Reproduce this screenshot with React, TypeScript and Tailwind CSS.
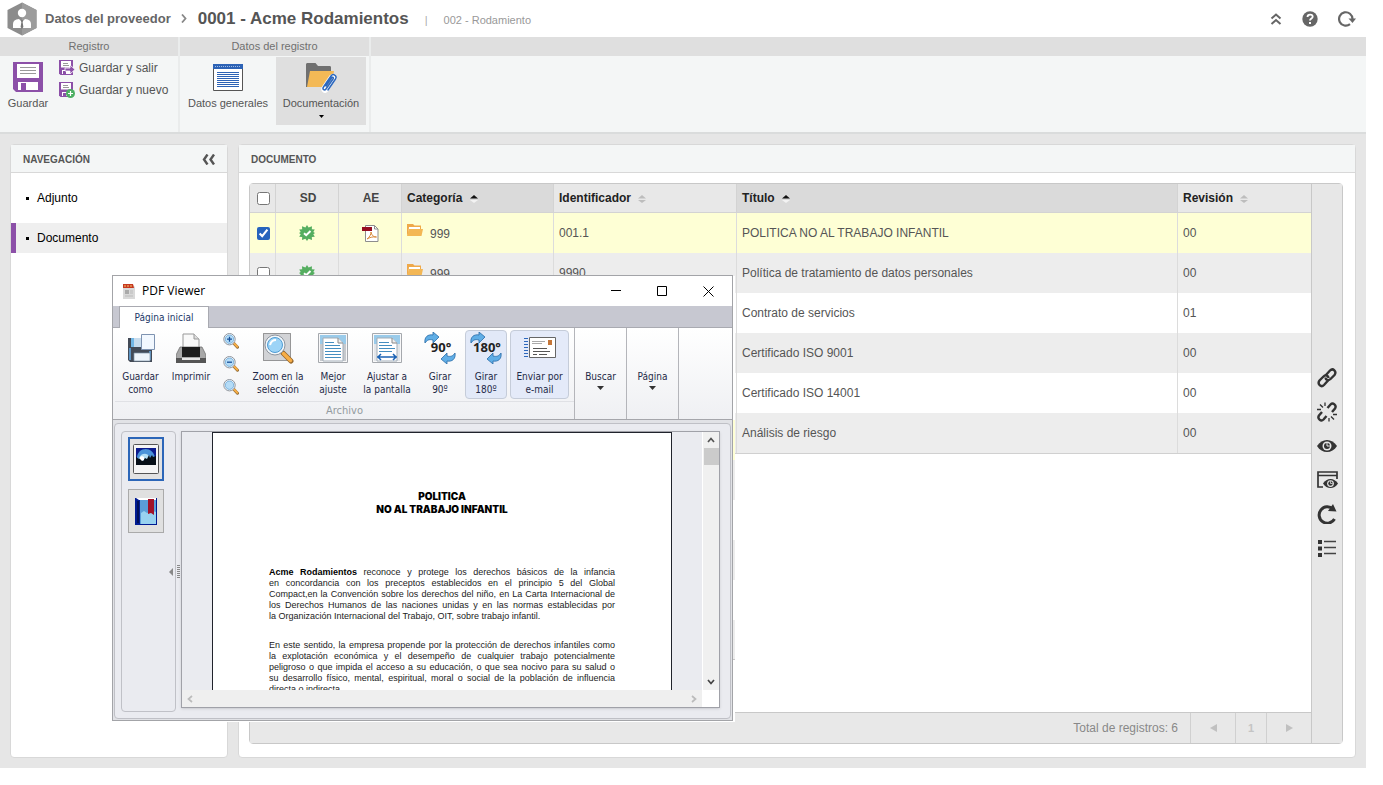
import { ReactNode, useState } from "react";

type DocumentRow = {
  id: string;
  title: string;
  revision: string;
  pdf?: boolean;
};

const ROWS: DocumentRow[] = [
  { id: "001.1", title: "POLITICA NO AL TRABAJO INFANTIL", revision: "00", pdf: true },
  { id: "9990", title: "Política de tratamiento de datos personales", revision: "00" },
  { id: "9991", title: "Contrato de servicios", revision: "01" },
  { id: "9992", title: "Certificado ISO 9001", revision: "00" },
  { id: "9993", title: "Certificado ISO 14001", revision: "00" },
  { id: "9994", title: "Análisis de riesgo", revision: "00" }
];

const POLICY_INTRO = [
  "en concordancia con los preceptos establecidos en el principio 5 del Global",
  "Compact,en la Convención sobre los derechos del niño, en La Carta Internacional de",
  "los Derechos Humanos de las naciones unidas y en las normas establecidas por"
];

const POLICY_BODY = [
  "En este sentido, la empresa propende por la protección de derechos infantiles como",
  "la explotación económica y el desempeño de cualquier trabajo potencialmente",
  "peligroso o que impida el acceso a su educación, o que sea nocivo para su salud o",
  "su desarrollo físico, mental, espiritual, moral o social de la población de influencia"
];

/* ---------- icons ---------- */

const Logo = () => (
  <svg width="30" height="34" viewBox="0 0 30 34" aria-hidden="true">
    <path d="M15 .5 29.5 8v18L15 33.5.5 26V8z" fill="#8c8c8c" />
    <path d="M15 .5 29.5 8v18L15 33.5z" fill="#9c9c9c" />
    <circle cx="15" cy="11" r="4.200" fill="#fff" />
    <path d="M6 26v-4c0-3 2-4.500 6-5l3 3 3-3c4 .5 6 2 6 5v4z" fill="#fff" />
    <path d="m13.800 18.500 1.200-.8 1.200.8-.6 1.500.8 5-1.400 2-1.400-2 .8-5z" fill="#777" />
  </svg>
);

const SaveIcon = () => (
  <svg width="30" height="30" viewBox="0 0 30 30" aria-hidden="true">
    <path d="M0 0h30v30H3l-3-3z" fill="#8c50a8" />
    <path d="M4 2h22v14H4z" fill="#fff" />
    <path d="M7 5.500h16M7 8.500h16M7 11.500h16" stroke="#9a9a9a" />
    <path d="M5 20h20v8H5z" fill="#fff" />
    <path d="M8 21h5v7H8z" fill="#8c50a8" />
  </svg>
);

const SmallSave = ({ children }: { children: ReactNode }) => (
  <svg width="16" height="16" viewBox="0 0 16 16" aria-hidden="true">
    <path d="M0 0h14v15H1.500L0 13.500z" fill="#8c50a8" />
    <path d="M2 1h10v6.500H2z" fill="#fff" />
    <path d="M4 3.500h5M4 5.500h6" stroke="#999" />
    <path d="M3 10h9v4H3z" fill="#fff" />
    <path d="M4 11h3v3H4z" fill="#8c50a8" />
    {children}
  </svg>
);

const FormIcon = () => (
  <svg width="30" height="27" viewBox="0 0 30 27" aria-hidden="true">
    <path d="M.5 3v23.500h29V3" fill="#fff" stroke="#555" />
    <path d="M0 0h30v5H0z" fill="#2d63b6" />
    <path d="M2 2.500h26" stroke="#9fbbe4" strokeDasharray="1 1" />
    <path d="M4 8.500h22M4 10.500h22M4 12.500h22M4 14.500h22M4 16.500h22M4 18.500h22M4 20.500h22M4 22.500h22" stroke="#2d63b6" />
  </svg>
);

const DocsIcon = () => (
  <svg width="31" height="30" viewBox="0 0 31 30" aria-hidden="true">
    <path d="M0 1.500C0 .6.600 0 1.500 0h8L12 3h11.500c1 0 1.500.5 1.500 1.500V24H0z" fill="#707070" />
    <path d="M4 8h24l-3 16H1z" fill="#f3b956" />
    <g fill="none" stroke="#fff" strokeWidth="3.500" strokeLinecap="round">
      <path d="m18 24 7-10c2-3 5-1 3.500 1.500L21 27c-2 2.500-5 .5-3.500-2.500l7.500-11" />
    </g>
    <path
      d="m20 23 5.500-8c1-1.500 2.500-.5 1.500 1l-7 10c-1.500 2-4 .5-2.500-2l7.500-11c2-3 6.500-.5 4.500 3l-7.500 11"
      fill="none"
      stroke="#2d68bd"
      strokeWidth="1.500"
      strokeLinecap="round"
    />
  </svg>
);

const SealIcon = () => (
  <svg width="16" height="16" viewBox="0 0 16 16" className="mx-auto" aria-hidden="true">
    <path
      d="m8 0 1.600 2.500L13 1.200l-.2 3.100 3 .2-1.500 2.400L16 8l-1.700 1.300 1.500 2.400-3 .2.200 3.100-3.400-1.300L8 16l-1.600-2.300L3 15l.2-3.100-3-.2 1.500-2.400L0 8l1.700-1.100L.2 4.500l3-.2L3 1.200l3.400 1.300z"
      fill="#55ae60"
    />
    <path d="m5 8.200 2.200 2L11.500 6" fill="none" stroke="#fff" strokeWidth="2" />
  </svg>
);

const PdfIcon = () => (
  <svg width="17" height="17" viewBox="0 0 17 17" className="mx-auto" aria-hidden="true">
    <path d="M3.500.500h9l3.500 3.500v12.500H3.500z" fill="#fff" stroke="#8d8d8d" />
    <path d="M12.500.500V4H16" fill="none" stroke="#8d8d8d" />
    <path d="M0 2h10v4H0z" fill="#960d20" />
    <path d="M5 14c3-2 4-5 4-7 .5 3 2 5 5.500 5-4-.5-7 .5-9.500 2" fill="none" stroke="#d98a3a" />
  </svg>
);

const FolderIcon = () => (
  <svg width="16" height="13" viewBox="0 0 16 13" aria-hidden="true">
    <path d="M0 0h6l1.500 1.500H14V5H3L0 12z" fill="#efa94a" />
    <path d="M2 3h11v2H3L1.500 8z" fill="#fff" />
    <path d="M2 5h14l-1.500 7H0z" fill="#f3b755" />
  </svg>
);

const SortIcon = ({ active = false }: { active?: boolean }) => (
  <svg width="8" height="8" viewBox="0 0 8 8" className="ml-1 inline-block" aria-hidden="true">
    <path d="M0 3.500 4 0l4 3.500z" fill={active ? "#111" : "#bdbdbd"} />
    <path d="M0 5h8L4 8z" fill={active ? "#f3f3f3" : "#bdbdbd"} />
  </svg>
);

const Triangle = ({ className }: { className: string }) => (
  <svg width="7" height="4" viewBox="0 0 7 4" className={className} aria-hidden="true">
    <path d="M0 0h7L3.500 4z" fill="currentColor" />
  </svg>
);

const LensIcon = ({ sign }: { sign?: string }) => (
  <svg width="16" height="16" viewBox="0 0 16 16" aria-hidden="true">
    <path d="m10.500 10 4 4.200" stroke="#8f6c38" strokeWidth="3" strokeLinecap="round" />
    <path d="m11 10.300 3.300 3.500" stroke="#f5ac45" strokeWidth="2" strokeLinecap="round" />
    <circle cx="6.500" cy="6.200" r="5.700" fill="#f3f7fb" stroke="#8f959d" />
    <circle cx="6.500" cy="6.200" r="4.200" fill="#b5dcf7" stroke="#5c9fd2" strokeWidth=".7" />
    {sign === "plus" ? <path d="M4 6.200h5M6.500 3.700v5" stroke="#174f99" strokeWidth="1.300" /> : null}
    {sign === "minus" ? <path d="M4 6.200h5" stroke="#174f99" strokeWidth="1.300" /> : null}
  </svg>
);

const SaveAsIcon = () => (
  <svg width="28" height="30" viewBox="0 0 28 30" aria-hidden="true">
    <path d="M1 5h24v24H3l-2-2z" fill="#434a56" />
    <path d="M4 5h3v9H4z" fill="#73b7e5" />
    <path d="M7 5h12v9H7z" fill="#c8dced" />
    <path d="M2 15h2v12H2zM22 18h2v9h-2z" fill="#5c93c2" />
    <path d="M7 20h16v8H7z" fill="#eef4fa" stroke="#7d93a8" strokeWidth=".7" />
    <path d="M14.500 1.500h13v15h-13z" fill="#f2f8ff" stroke="#7e93b1" />
  </svg>
);

const PrintIcon = () => (
  <svg width="30" height="30" viewBox="0 0 30 30" aria-hidden="true">
    <path d="M7 16V1h11l5 5v10z" fill="#f9f9f9" stroke="#999" />
    <path d="M18 1v5h5" fill="#ddd" stroke="#999" />
    <path d="M4 14h22l4 8v6H0v-6z" fill="#a8a8a8" stroke="#666" strokeWidth=".7" />
    <path d="M6 14h18v10H6z" fill="#1c1c1c" />
    <path d="M0 25h30v5H0z" fill="#555" />
    <path d="M6 25h18v2H6z" fill="#e6e6e6" />
  </svg>
);

const ZoomSelectionIcon = () => (
  <svg width="32" height="32" viewBox="0 0 32 32" aria-hidden="true">
    <path d="M1.500 1.500h27v27h-27z" fill="#d2d3d6" stroke="#444" strokeDasharray="1 1" />
    <path d="m21 21 8 8" stroke="#96672c" strokeWidth="5" strokeLinecap="round" />
    <path d="m21.500 21.500 7 7" stroke="#f8ae47" strokeWidth="3.500" strokeLinecap="round" />
    <circle cx="13" cy="13" r="10" fill="#f3f7fa" stroke="#8e959f" />
    <circle cx="13" cy="13" r="7.500" fill="#9dd4f7" stroke="#4f9cd4" />
    <path d="M8 13c1-4 3-5 6-5" fill="none" stroke="#fff" strokeWidth="2" />
  </svg>
);

const FitIcon = ({ wide = false }: { wide?: boolean }) => (
  <svg width="30" height="30" viewBox="0 0 30 30" aria-hidden="true">
    <path d="M.5.500h29v29H.5z" fill="#f8f8f9" stroke="#a5a8ad" />
    <path d="M2 2h26v26H2z" fill={wide ? "#e3e6e9" : "#c6c9cd"} />
    <path d="M2 2h26v9H2z" fill="#9acbea" />
    <path d="M5 5h15l5 5v18H5z" fill="#fff" stroke="#a2adb8" />
    <path d="M20 5v5h5" fill="#eee" stroke="#888" />
    <path
      d={wide ? "M7 9.500h10M7 12.500h13M7 15.500h16M7 18.500h13" : "M7 9.500h9M7 12.500h15M7 15.500h16M7 18.500h16M7 21.500h16M7 24.500h16"}
      stroke="#458ec0"
    />
    {wide ? <path d="M5 24h20M9 21l-3 3 3 3M21 21l3 3-3 3" fill="none" stroke="#1a62b4" strokeWidth="1.500" /> : null}
  </svg>
);

const RotateIcon = ({ label }: { label: string }) => (
  <svg width="32" height="32" viewBox="0 0 32 32" aria-hidden="true">
    <g fill="#60aee6" stroke="#286ba7" strokeWidth=".8">
      <path d="M1 11C0 5 4 2 9 3V0l6 5-6 6V8C5 7 3 8 1 11z" />
      <path d="M31 21c1 6-3 9-8 8v3l-6-5 6-6v3c4 1 6 0 8-3z" />
    </g>
    <text x="17" y="20" textAnchor="middle" fontFamily="Open Sans, sans-serif" fontSize="13" fontWeight="700" fill="#222">
      {label}
    </text>
  </svg>
);

const MailIcon = () => (
  <svg width="32" height="22" viewBox="0 0 32 22" aria-hidden="true">
    <path d="M2 1v20" stroke="#2d68bd" strokeWidth="4" strokeDasharray="1 2" />
    <path d="M5.500.500h26v20h-26z" fill="#fff" stroke="#666" />
    <path d="M8 4.500h13M8 6.500h10" stroke="#aaa" />
    <path d="M9 11.500h14M9 14.500h17M9 17.500h4M15 17.500h8" stroke="#555" />
    <path d="M24 3h4v5h-4z" fill="#c57639" />
  </svg>
);

const ThumbIcon = () => (
  <svg width="26" height="30" viewBox="0 0 26 30" aria-hidden="true">
    <rect x=".5" y=".5" width="25" height="29" rx="1" fill="#f5f5f5" stroke="#555" />
    <path d="M3 4h20v17H3z" fill="#0b1b8c" />
    <path d="M4 14c0-11 16-13 18 0v3H4z" fill="#4a93d9" />
    <path d="M6 14c2-5 9-6 11 0v2H6z" fill="#b2def6" />
    <path d="M3 13l3 2 2-1 2 3 2-3 2 1 2-4 1 3 2-3 1 2 3-1v9H3z" fill="#071018" />
    <path d="m7 13 2-1 2 1v3l-2 1-2-2z" fill="#fff" />
  </svg>
);

const BookIcon = () => (
  <svg width="22" height="28" viewBox="0 0 22 28" aria-hidden="true">
    <path d="M0 1h22v27H0z" fill="#001b92" />
    <path d="M1 1h20v2H4z" fill="#fff" />
    <path d="M5 3h16v24H5z" fill="#5b9ed8" />
    <path d="M6 16l3-2 3 2 3-1 3-1 3 1v12H6z" fill="#98d2f0" />
    <path d="M2 4h2v22H2z" fill="#00105b" />
    <path d="M13 2h6v16l-3-2-3 1z" fill="#a11228" />
  </svg>
);

const ToolLink = () => (
  <svg width="20" height="20" viewBox="0 0 20 20" fill="none" stroke="#333" strokeWidth="2.400" aria-hidden="true">
    <path d="m8.500 7.500 4.500-5c3-3 7 1 4.500 4.500l-4 4c-2 2-5 1-5-1.500" />
    <path d="m11.500 12-4.500 5c-3 3-7-1-4.500-4.500l4-4c2-2 5-1 5 1.500" />
  </svg>
);

const ToolUnlink = () => (
  <svg width="20" height="20" viewBox="0 0 20 20" fill="none" stroke="#333" strokeWidth="2.400" aria-hidden="true">
    <path d="m10.500 6 3-3.500c2.500-2.500 6.500.8 4.500 4L15 10" />
    <path d="m5 10-3 3.500c-2 3.200 2 6.500 4.500 4l3-3.500" />
    <path d="m3 2.500 3 3M8 .5v3.500M0 7.500h4M14 14.500l3 3M12 16v3.500M16 12.500h4" strokeWidth="1.300" />
  </svg>
);

const EyeShape = () => (
  <>
    <path d="M0 6C5-2 15-2 20 6 15 14 5 14 0 6z" fill="#333" />
    <circle cx="10" cy="6" r="4.500" fill="#e7e7e7" />
    <circle cx="10" cy="6" r="3" fill="#333" />
    <path d="M10 3v3h3" stroke="#e7e7e7" fill="none" />
  </>
);

const ToolEye = () => (
  <svg width="20" height="12" viewBox="0 0 20 12" aria-hidden="true">
    <EyeShape />
  </svg>
);

const ToolPreview = () => (
  <svg width="21" height="18" viewBox="0 0 21 18" aria-hidden="true">
    <path d="M20 8V1H1v15h5M1 4.500h19" fill="none" stroke="#333" strokeWidth="1.700" />
    <path d="M2 2.500h5" stroke="#e7e7e7" strokeDasharray="1 1" />
    <g transform="translate(6 8) scale(.75)">
      <EyeShape />
    </g>
  </svg>
);

const ToolRefresh = () => (
  <svg width="20" height="20" viewBox="0 0 20 20" aria-hidden="true">
    <path d="M17.500 15A8.200 8.200 0 1 1 16 5" fill="none" stroke="#333" strokeWidth="3" />
    <path d="m16 0 3.500 7.500-8.500-.5z" fill="#333" />
  </svg>
);

const ToolList = () => (
  <svg width="18" height="17" viewBox="0 0 18 17" aria-hidden="true">
    <path d="M0 0h4v4H0zM0 6.500h4v4H0zM0 13h4v4H0z" fill="#333" />
    <path d="M6 1.500h12M6 7.500h12M6 13.500h12" stroke="#444" strokeWidth="1.500" />
  </svg>
);

const TOOLS = [
  { label: "Asociar", icon: <ToolLink /> },
  { label: "Desasociar", icon: <ToolUnlink /> },
  { label: "Visualizar", icon: <ToolEye /> },
  { label: "Vista previa", icon: <ToolPreview /> },
  { label: "Actualizar", icon: <ToolRefresh /> },
  { label: "Lista", icon: <ToolList /> }
];

/* ---------- main page ---------- */

const PageHeader = () => (
  <header className="flex h-[37px] items-center bg-white pl-[7px] pr-[10px] text-[#666]">
    <Logo />
    <span className="ml-2 pt-px text-[13px] font-bold text-[#666]">Datos del proveedor</span>
    <svg width="6" height="9" viewBox="0 0 6 9" className="ml-[10px] mr-[11px]" aria-hidden="true">
      <path d="m1 .5 3.500 4L1 8.500" fill="none" stroke="#888" strokeWidth="1.800" />
    </svg>
    <h1 className="text-[17px] font-bold text-[#555]">0001 - Acme Rodamientos</h1>
    <span className="ml-4 pt-1 text-[11px] text-[#aaa]">|</span>
    <span className="ml-4 pt-1 text-[11px] text-[#999]">002 - Rodamiento</span>
    <div className="ml-auto flex items-center gap-5">
      <button type="button" aria-label="Contraer">
        <svg width="12" height="12" viewBox="0 0 12 12" fill="none" stroke="#666" strokeWidth="2" aria-hidden="true">
          <path d="m1.500 5.500 4.500-4 4.500 4M1.500 11 6 7l4.500 4" />
        </svg>
      </button>
      <button type="button" aria-label="Ayuda">
        <svg width="16" height="16" viewBox="0 0 16 16" aria-hidden="true">
          <circle cx="8" cy="8" r="7.700" fill="#666" />
          <path d="M5.500 6c0-3.300 5.200-3 5.200-.3C10.700 7.500 8 7.500 8 9.500" fill="none" stroke="#fff" strokeWidth="1.800" />
          <path d="M7 11h2v2H7z" fill="#fff" />
        </svg>
      </button>
      <button type="button" aria-label="Recargar">
        <svg width="18" height="16" viewBox="0 0 18 16" aria-hidden="true">
          <path d="M12 13.200A6.700 6.700 0 1 1 14.500 8" fill="none" stroke="#666" strokeWidth="2.200" />
          <path d="M10.500 7.500H18L14.500 12z" fill="#666" />
        </svg>
      </button>
    </div>
  </header>
);

const RibbonGroup = ({ title, className, children }: { title?: string; className: string; children?: ReactNode }) => (
  <section className={className}>
    <h2 className="h-[19px] bg-[#dfdfdf] text-center text-[11px] leading-[19px] text-[#707070]">{title}</h2>
    <div className="flex h-[76px] items-start bg-[#f4f6f6]">{children}</div>
  </section>
);

const MainRibbon = () => (
  <div className="flex gap-[2px] border-b-2 border-[#dadcdc] bg-[#eaecec] text-[#555]">
    <RibbonGroup title="Registro" className="w-[178px]">
      <button type="button" className="flex w-14 flex-col items-center pt-[6px] text-[11px] leading-4">
        <SaveIcon />
        <span className="mt-[3px]">Guardar</span>
      </button>
      <div className="flex flex-col gap-[6px] pl-[3px] pt-1 text-[12px] leading-4">
        <button type="button" className="flex gap-1">
          <SmallSave>
            <path d="M6 8h5V5l5 4.500-5 4.500v-3H6z" fill="#8c50a8" stroke="#fff" strokeWidth=".8" />
          </SmallSave>
          Guardar y salir
        </button>
        <button type="button" className="flex gap-1">
          <SmallSave>
            <circle cx="11.500" cy="11.500" r="4.500" fill="#4caf62" />
            <path d="M9 11.500h5M11.500 9v5" stroke="#fff" strokeWidth="1.200" />
          </SmallSave>
          Guardar y nuevo
        </button>
      </div>
    </RibbonGroup>
    <RibbonGroup title="Datos del registro" className="w-[189px]">
      <button type="button" className="flex w-24 flex-col items-center pt-2 text-[11px] leading-4">
        <FormIcon />
        <span className="mt-1">Datos generales</span>
      </button>
      <button type="button" className="mt-[1px] flex h-[68px] w-[90px] flex-col items-center bg-[#dfdfdf] pt-[6px] text-[11px] leading-4">
        <DocsIcon />
        <span className="mt-[2px]">Documentación</span>
        <Triangle className="mt-1 h-[3px] w-[5px] text-black" />
      </button>
    </RibbonGroup>
    <RibbonGroup className="flex-1" />
  </div>
);

const NavItem = ({ label, active = false }: { label: string; active?: boolean }) => (
  <li>
    <a
      href="#"
      className={
        active
          ? "flex h-[30px] items-center gap-2 border-l-[5px] border-[#8c50a8] bg-[#efefef] pl-[10px]"
          : "flex h-[30px] items-center gap-2 border-l-[5px] border-transparent pl-[10px]"
      }
    >
      <span className="size-[3px] bg-black" />
      {label}
    </a>
  </li>
);

const NavPanel = () => (
  <nav className="w-[218px] shrink-0 rounded-sm border border-[#d8d8d8] bg-white">
    <div className="flex h-7 items-center justify-between border-b border-[#d8d8d8] bg-[#f4f6f6] px-3 pt-px">
      <h2 className="text-[10px] font-bold text-[#555]">NAVEGACIÓN</h2>
      <button type="button" aria-label="Ocultar navegación">
        <svg width="13" height="11" viewBox="0 0 13 11" fill="none" stroke="#555" strokeWidth="2.400" aria-hidden="true">
          <path d="M5.500.500 2 5.500l3.500 5M12 .5l-3.500 5 3.500 5" />
        </svg>
      </button>
    </div>
    <ul className="flex flex-col gap-[10px] pt-[10px] text-[12px] text-black">
      <NavItem label="Adjunto" />
      <NavItem label="Documento" active />
    </ul>
  </nav>
);

const headCell = "border-b border-r border-[#d3d3d3] text-left font-bold text-[#222]";
const bodyCell = "border-r border-[#dcdcdc] px-[5px]";

const DocumentsTable = () => {
  const [selected, setSelected] = useState<string[]>(["001.1"]);

  const toggle = (id: string) => {
    setSelected((prev) => (prev.includes(id) ? prev.filter((item) => item !== id) : [...prev, id]));
  };

  const toggleAll = () => {
    setSelected((prev) => (prev.length === ROWS.length ? [] : ROWS.map((row) => row.id)));
  };

  const rowColor = (row: DocumentRow, index: number) => {
    if (selected.includes(row.id)) {
      return "h-10 bg-[#feffd5]";
    }
    return index % 2 ? "h-10 bg-[#ededed]" : "h-10 bg-white";
  };

  return (
    <table className="w-full table-fixed border-separate border-spacing-0 border-b border-[#d0d0d0] text-[12px] text-[#555]">
      <colgroup>
        <col className="w-[26px]" />
        <col className="w-[63px]" />
        <col className="w-[63px]" />
        <col className="w-[152px]" />
        <col className="w-[183px]" />
        <col />
        <col className="w-[133px]" />
      </colgroup>
      <thead>
        <tr className="h-[29px] bg-[#e8e8e8]">
          <th className={headCell}>
            <input
              type="checkbox"
              aria-label="Seleccionar todo"
              className="ml-[7px] block size-[13px] accent-[#2764bd]"
              checked={selected.length === ROWS.length}
              onChange={toggleAll}
            />
          </th>
          <th className="border-b border-r border-[#d3d3d3] pl-[2px] text-center font-bold text-[#444]">SD</th>
          <th className="border-b border-r border-[#d3d3d3] pl-[2px] text-center font-bold text-[#444]">AE</th>
          <th className={`${headCell} bg-[#dadada] px-[5px]`}>
            Categoría <SortIcon active />
          </th>
          <th className={`${headCell} px-[5px]`}>
            Identificador <SortIcon />
          </th>
          <th className={`${headCell} bg-[#dadada] px-[5px]`}>
            Título <SortIcon active />
          </th>
          <th className="border-b border-[#d3d3d3] px-[5px] text-left font-bold text-[#222]">
            Revisión <SortIcon />
          </th>
        </tr>
      </thead>
      <tbody>
        {ROWS.map((row, index) => (
          <tr key={row.id} className={rowColor(row, index)}>
            <td className="border-r border-[#dcdcdc]">
              <input
                type="checkbox"
                aria-label={row.title}
                className="ml-[7px] block size-[13px] accent-[#2764bd]"
                checked={selected.includes(row.id)}
                onChange={() => toggle(row.id)}
              />
            </td>
            <td className={bodyCell}>
              <SealIcon />
            </td>
            <td className={bodyCell}>{row.pdf ? <PdfIcon /> : null}</td>
            <td className={bodyCell}>
              <div className="flex items-start gap-[7px] pt-[2px]">
                <FolderIcon />
                <span className="leading-5">999</span>
              </div>
            </td>
            <td className={bodyCell}>{row.id}</td>
            <td className={bodyCell}>{row.title}</td>
            <td className="px-[5px]">{row.revision}</td>
          </tr>
        ))}
      </tbody>
    </table>
  );
};

const DocumentPanel = () => (
  <section className="flex min-w-0 flex-1 flex-col rounded-sm border border-[#d8d8d8] bg-white">
    <h2 className="h-7 border-b border-[#d8d8d8] bg-[#f4f6f6] px-3 text-[10px] font-bold leading-[29px] text-[#555]">DOCUMENTO</h2>
    <div className="mb-[13px] ml-[10px] mr-3 mt-[10px] flex flex-1 rounded-sm border border-[#c8c8c8]">
      <div className="flex min-w-0 flex-1 flex-col">
        <DocumentsTable />
        <footer className="mt-auto flex h-[31px] items-stretch justify-end border-t border-[#c8c8c8] bg-[#e8e8e8] text-[12px] text-[#888]">
          <span className="self-center pr-3">Total de registros: 6</span>
          <button type="button" aria-label="Página anterior" className="flex w-[45px] items-center justify-center border-l border-[#d0d0d0]">
            <svg width="7" height="8" viewBox="0 0 7 8" aria-hidden="true">
              <path d="M7 0v8L0 4z" fill="#c0c0c0" />
            </svg>
          </button>
          <button type="button" className="w-[31px] border-l border-[#d0d0d0] text-[11px] font-bold text-[#c4c4c4]">
            1
          </button>
          <button type="button" aria-label="Página siguiente" className="flex w-[45px] items-center justify-center border-l border-[#d0d0d0]">
            <svg width="7" height="8" viewBox="0 0 7 8" aria-hidden="true">
              <path d="M0 0v8l7-4z" fill="#c0c0c0" />
            </svg>
          </button>
        </footer>
      </div>
      <aside className="flex w-[31px] flex-col items-center border-l border-[#c8c8c8] bg-[#e7e7e7] pt-[177px]">
        {TOOLS.map((tool) => (
          <button key={tool.label} type="button" aria-label={tool.label} className="flex h-[34px] w-full items-center justify-center">
            {tool.icon}
          </button>
        ))}
      </aside>
    </div>
  </section>
);

/* ---------- viewer window ---------- */

const ViewerButton = ({ className, icon, children }: { className: string; icon: ReactNode; children: ReactNode }) => (
  <button type="button" className={`flex h-[69px] shrink-0 flex-col items-center rounded-sm border pt-px ${className}`}>
    <span className="flex h-8 items-center">{icon}</span>
    <span className="mt-[6px] block whitespace-nowrap">{children}</span>
  </button>
);

const ViewerRibbon = () => (
  <div className="flex h-[92px] border-b border-[#a5a6ab] bg-linear-to-b from-white to-[#eff0f3] text-[10px] leading-[13px] text-[#1f2a48]">
    <section className="flex w-[462px] flex-col border-r border-[#b4b5ba] pl-[2px] pt-[2px]">
      <div className="flex">
        <ViewerButton className="w-[51px] border-transparent" icon={<SaveAsIcon />}>
          Guardar
          <br />
          como
        </ViewerButton>
        <ViewerButton className="w-[50px] border-transparent" icon={<PrintIcon />}>
          Imprimir
        </ViewerButton>
        <div className="flex w-[30px] flex-col items-center gap-[7px] pt-[3px]">
          <button type="button" aria-label="Acercar">
            <LensIcon sign="plus" />
          </button>
          <button type="button" aria-label="Alejar">
            <LensIcon sign="minus" />
          </button>
          <button type="button" aria-label="Zoom">
            <LensIcon />
          </button>
        </div>
        <ViewerButton className="w-16 border-transparent" icon={<ZoomSelectionIcon />}>
          Zoom en la
          <br />
          selección
        </ViewerButton>
        <ViewerButton className="w-[46px] border-transparent" icon={<FitIcon />}>
          Mejor
          <br />
          ajuste
        </ViewerButton>
        <ViewerButton className="w-[62px] border-transparent" icon={<FitIcon wide />}>
          Ajustar a
          <br />
          la pantalla
        </ViewerButton>
        <ViewerButton className="w-11 border-transparent" icon={<RotateIcon label="90°" />}>
          Girar
          <br />
          90º
        </ViewerButton>
        <ViewerButton className="ml-[3px] w-[42px] border-[#c5ccd9] bg-[#e2e9f8]" icon={<RotateIcon label="180°" />}>
          Girar
          <br />
          180º
        </ViewerButton>
        <ViewerButton className="ml-[3px] w-[59px] border-[#c5ccd9] bg-[#e4eaf9]" icon={<MailIcon />}>
          Enviar por
          <br />
          e-mail
        </ViewerButton>
      </div>
      <p className="mt-[2px] border-t border-[#e0e1e5] text-center text-[11px] leading-[18px] text-[#939ba0]">Archivo</p>
    </section>
    {["Buscar", "Página"].map((label) => (
      <button key={label} type="button" className="flex w-[52px] flex-col items-center border-r border-[#b4b5ba] pt-[42px]">
        {label}
        <Triangle className="mt-[3px] text-[#333]" />
      </button>
    ))}
  </div>
);

const PolicyPage = () => (
  <article className="ml-[30px] w-[460px] shrink-0 border-x border-t border-[#20232c] bg-white px-14 pt-[57px] font-['Liberation_Sans',Arial,sans-serif] text-[9px] leading-[11px] text-[#222]">
    <h3 className="text-center font-[Inter,sans-serif] text-[10px] font-black leading-[13px] text-black">
      POLITICA
      <br />
      NO AL TRABAJO INFANTIL
    </h3>
    <div className="mt-[51px]">
      <p className="whitespace-nowrap [text-align-last:justify]">
        <b className="text-black">Acme Rodamientos</b> reconoce y protege los derechos básicos de la infancia
      </p>
      {POLICY_INTRO.map((line) => (
        <p key={line} className="whitespace-nowrap [text-align-last:justify]">
          {line}
        </p>
      ))}
      <p>la Organización Internacional del Trabajo, OIT, sobre trabajo infantil.</p>
    </div>
    <div className="mt-[18px]">
      {POLICY_BODY.map((line) => (
        <p key={line} className="whitespace-nowrap [text-align-last:justify]">
          {line}
        </p>
      ))}
      <p>directa o indirecta.</p>
    </div>
  </article>
);

const Chevron = ({ d, color }: { d: string; color: string }) => (
  <svg width="8" height="8" viewBox="0 0 8 8" aria-hidden="true">
    <path d={d} fill="none" stroke={color} strokeWidth="1.700" />
  </svg>
);

const ViewerBody = () => (
  <div className="m-px mt-[3px] flex h-[296px] rounded-sm border border-[#bfc0c6] bg-[#eaebf0] pb-[6px] pl-[6px] pr-[10px] pt-[7px]">
    <div className="flex w-[55px] flex-col items-start gap-2 rounded-sm border border-[#c0c1c7] pl-[6px] pt-[5px]">
      <button type="button" aria-label="Miniaturas" className="flex h-11 w-9 items-center justify-center border-2 border-[#2c66b8] bg-[#e2e2e2]">
        <ThumbIcon />
      </button>
      <button type="button" aria-label="Marcadores" className="flex h-11 w-9 items-center justify-center border border-[#aaa] bg-[#e0e0e0]">
        <BookIcon />
      </button>
    </div>
    <div className="flex w-[5px] items-center justify-center">
      <svg width="12" height="14" viewBox="0 0 12 14" className="relative right-1 shrink-0" aria-hidden="true">
        <path d="M4 3v8L0 7z" fill="#888" />
        <path d="M9.500 0v14" stroke="#888" strokeWidth="3" strokeDasharray="1 1" />
      </svg>
    </div>
    <div className="mb-1 flex min-w-0 flex-1 flex-col border border-[#a0a1a8] shadow-sm">
      <div className="flex min-h-0 flex-1">
        <div className="flex min-w-0 flex-1 overflow-hidden">
          <PolicyPage />
        </div>
        <div className="flex w-[17px] flex-col items-center border-l border-white bg-[#f0f0f0]">
          <button type="button" aria-label="Subir" className="flex h-4 items-center">
            <Chevron d="m1 6 3-3.500L7 6" color="#555" />
          </button>
          <div className="h-[17px] w-[15px] bg-[#cbcbcb]" />
          <button type="button" aria-label="Bajar" className="mt-auto flex h-4 items-center">
            <Chevron d="m1 2 3 3.500L7 2" color="#444" />
          </button>
        </div>
      </div>
      <div className="flex h-[17px] bg-white">
        <div className="flex flex-1 items-center justify-between bg-[#efefef] px-1">
          <button type="button" aria-label="Izquierda">
            <Chevron d="M6 1 2.500 4 6 7" color="#bbb" />
          </button>
          <button type="button" aria-label="Derecha">
            <Chevron d="m2 1 3.500 3L2 7" color="#bbb" />
          </button>
        </div>
        <div className="w-[17px]" />
      </div>
    </div>
  </div>
);

// Row stripes left showing along the right edge of the window
const EdgeStripes = () => (
  <div className="absolute -right-[3px] top-[144px] w-[2px]" aria-hidden="true">
    <div className="h-10 bg-[#feffd5]" />
    <div className="h-10 bg-[#ededed]" />
    <div className="h-10 bg-white" />
    <div className="h-10 bg-[#ededed]" />
    <div className="h-10 bg-white" />
    <div className="h-10 border-b border-[#c8c8c8] bg-[#ededed]" />
  </div>
);

const PdfViewerWindow = () => (
  <div
    role="dialog"
    aria-label="PDF Viewer"
    className="absolute left-28 top-[275px] w-[621px] border border-[#a3a4a8] bg-[#e1e2e6] font-['DejaVu_Sans_Condensed','DejaVu_Sans',sans-serif] shadow-[2px_1px_0_#fff]"
  >
    <div className="flex h-[30px] items-center bg-white pl-[10px] pr-[18px] text-[12px] text-black">
      <svg width="12" height="16" viewBox="0 0 12 16" aria-hidden="true">
        <path d="M0 1h9l3 3v12H0z" fill="#d9d9d9" />
        <path d="M0 1h10l1 4H0z" fill="#c63820" />
        <path d="M1 3h8" stroke="#f5c56e" strokeDasharray="2 1" />
        <path d="M2 7h4v4H2z" fill="#aaa" />
        <path d="M7 8h3M7 10h3M2 13h8" stroke="#bbb" />
      </svg>
      <span className="ml-[7px] font-['Open_Sans',sans-serif]">PDF Viewer</span>
      <div className="ml-auto flex items-center gap-9">
        <button type="button" aria-label="Minimizar">
          <svg width="10" height="10" viewBox="0 0 10 10" aria-hidden="true">
            <path d="M0 4.500h10" stroke="#000" />
          </svg>
        </button>
        <button type="button" aria-label="Maximizar">
          <svg width="10" height="10" viewBox="0 0 10 10" aria-hidden="true">
            <path d="M.5.500h9v9h-9z" fill="none" stroke="#000" />
          </svg>
        </button>
        <button type="button" aria-label="Cerrar">
          <svg width="11" height="11" viewBox="0 0 11 11" aria-hidden="true">
            <path d="m.5.500 10 10M10.500.500l-10 10" stroke="#000" />
          </svg>
        </button>
      </div>
    </div>
    <div className="flex h-[22px] items-end border-b border-[#a9aab1] bg-[#c7c8d1] pl-[6px]">
      <button type="button" className="-mb-px h-[22px] w-[90px] border border-b-0 border-[#a9aab1] bg-white text-[10px] text-[#1c3768]">
        Página inicial
      </button>
    </div>
    <ViewerRibbon />
    <ViewerBody />
    <EdgeStripes />
  </div>
);

export default function App() {
  return (
    <div className="relative flex min-h-screen flex-col bg-white pb-[17px] pr-[17px] font-['Liberation_Sans',Arial,sans-serif]">
      <PageHeader />
      <MainRibbon />
      <main className="flex flex-1 gap-[10px] bg-[#e6e6e6] p-[10px]">
        <NavPanel />
        <DocumentPanel />
      </main>
      <PdfViewerWindow />
    </div>
  );
}
